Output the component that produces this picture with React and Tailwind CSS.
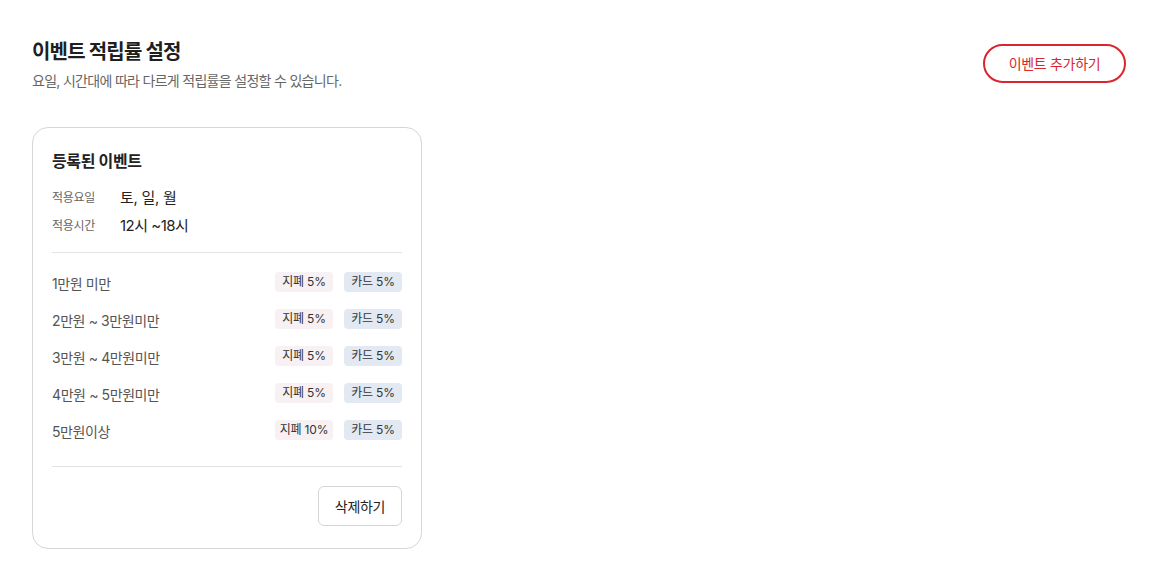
import React from "react";

const tiers = [
  { label: "1만원 미만", cash: "5%", card: "5%" },
  { label: "2만원 ~ 3만원미만", cash: "5%", card: "5%" },
  { label: "3만원 ~ 4만원미만", cash: "5%", card: "5%" },
  { label: "4만원 ~ 5만원미만", cash: "5%", card: "5%" },
  { label: "5만원이상", cash: "10%", card: "5%" },
];

const App = () => {
  return (
    <div
      className="min-h-[584px] bg-white px-8 pt-[38px] text-[#222]"
      style={{ fontFamily: 'Inter, "Noto Sans CJK KR", sans-serif' }}
    >
      <div className="flex items-start justify-between pr-[13px]">
        <div>
          <h1 className="text-[20px] font-bold leading-[28px] tracking-[-0.8px] text-[#1f1f1f]">
            이벤트 적립률 설정
          </h1>
          <p className="mt-[5px] text-[14px] leading-[20px] tracking-[-0.7px] text-[#666]">
            요일, 시간대에 따라 다르게 적립률을 설정할 수 있습니다.
          </p>
        </div>
        <button className="mt-[6px] h-[39px] w-[143px] rounded-full border-2 border-[#d8262e] text-[14px] tracking-[-0.3px] text-[#d8262e]">
          이벤트 추가하기
        </button>
      </div>

      <div className="mt-[36px] w-[390px] rounded-[16px] border border-[#d6d6d6] px-[19px] pt-[22px] pb-[22px]">
        <h2 className="text-[16px] font-semibold leading-[22px] tracking-[-0.4px] text-[#222]">등록된 이벤트</h2>

        <div className="mt-[15px] flex flex-col gap-[6px]">
          <div className="flex h-[22px] items-center">
            <span className="w-[68px] text-[12px] tracking-[-0.3px] text-[#666]">적용요일</span>
            <span className="text-[15px] tracking-[-0.3px] text-[#222]">토, 일, 월</span>
          </div>
          <div className="flex h-[22px] items-center">
            <span className="w-[68px] text-[12px] tracking-[-0.3px] text-[#666]">적용시간</span>
            <span className="text-[15px] tracking-[-0.5px] text-[#222]">12시 ~18시</span>
          </div>
        </div>

        <div className="mt-[15px] h-px bg-[#e2e2e2]" />

        <div className="flex flex-col gap-[17px] pt-[19px] pb-[26px]">
          {tiers.map((t) => (
            <div key={t.label} className="flex h-[20px] items-center justify-between">
              <span className="pt-[2px] text-[14px] tracking-[-0.4px] text-[#555]">{t.label}</span>
              <div className="flex gap-[11px]">
                <span className="flex h-[20px] w-[58px] items-center justify-center rounded-[4px] bg-[#f8f1f3] text-[12px] tracking-[-0.2px] text-[#333]">
                  지폐 {t.cash}
                </span>
                <span className="flex h-[20px] w-[58px] items-center justify-center rounded-[4px] bg-[#e2e9f2] text-[12px] tracking-[-0.2px] text-[#333]">
                  카드 {t.card}
                </span>
              </div>
            </div>
          ))}
        </div>

        <div className="h-px bg-[#e2e2e2]" />

        <div className="flex justify-end pt-[19px]">
          <button className="h-[40px] w-[84px] rounded-[6px] border border-[#d6d6d6] text-[14px] tracking-[-0.3px] text-[#222]">
            삭제하기
          </button>
        </div>
      </div>
    </div>
  );
};

export default App;
